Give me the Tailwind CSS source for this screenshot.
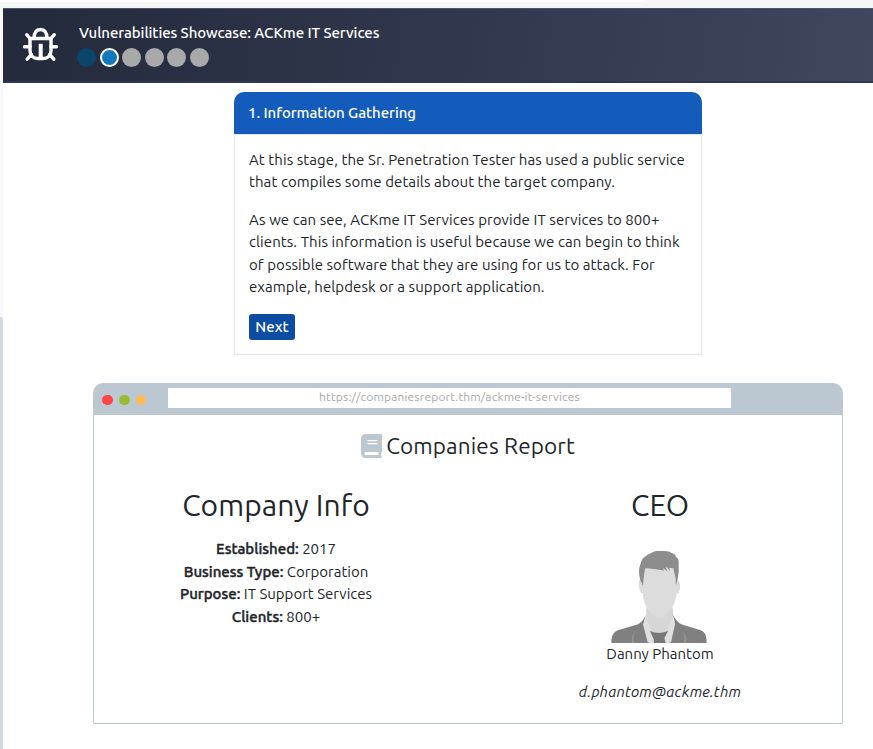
<!DOCTYPE html>
<html lang="en">
<head>
<meta charset="utf-8">
<title>Vulnerabilities Showcase</title>
<script src="https://cdn.jsdelivr.net/npm/@tailwindcss/browser@4"></script>
</head>
<body class="h-[749px] w-[873px] overflow-hidden bg-white font-['Ubuntu','Noto_Sans',sans-serif] text-[15px] leading-[22.4px] text-[#212529]">
<div class="flex h-full flex-col">
  <div class="h-2 shrink-0 bg-[#f6f6f6]"><div class="h-[2px] w-[645px] rounded-br-lg bg-white"></div></div>
  <div class="flex min-h-0 flex-1">
    <aside class="w-[3px] shrink-0 bg-[#f9f9fb] pt-[309px]"><div class="h-full rounded-tr-[3px] bg-[#d2d8e0]"></div></aside>
    <main class="flex flex-1 flex-col">
      <header class="flex h-[75px] shrink-0 border-t border-b-2 border-t-[#4d566e] border-b-[#2e3854] bg-linear-[100deg] from-[#232a3b] from-0% via-[#373e56] via-75% to-[#3f485f] to-100% pl-[19px]">
        <svg class="mt-[17px] h-[38px] w-[38px]" viewBox="0 0 38 38" fill="none" stroke="white" stroke-width="3.4" stroke-linecap="round" stroke-linejoin="round">
          <path d="M12 12.500C12 6.500 14.500 3.500 18.500 3.500S25 6.500 25 12.500"/>
          <path d="M8 12.500h21v12c0 5-3 8-8 8h-5c-5 0-8-3-8-8z"/>
          <path d="M8 12.500L4.700 8.700M29 12.500L32.300 8.700M8 20.800H2.500M29 20.800h5.500M9.500 28.500L5.200 33.200M27.500 28.500L31.800 33.200"/>
          <path d="M18.700 17.800v14" stroke-linecap="butt" stroke-width="4"/>
        </svg>
        <div class="ml-[19px]">
          <div class="mt-[13px] h-[22px] whitespace-nowrap font-medium tracking-[-0.08px] text-white">Vulnerabilities Showcase: ACKme IT Services</div>
          <div class="-ml-[2px] mt-[4px] flex gap-[3.6px]">
            <i class="h-[19px] w-[19px] rounded-full bg-[#0b4569]"></i>
            <i class="h-[19px] w-[19px] rounded-full border-2 border-white bg-[#117abf]"></i>
            <i class="h-[19px] w-[19px] rounded-full bg-[#a9a9a9]"></i>
            <i class="h-[19px] w-[19px] rounded-full bg-[#a9a9a9]"></i>
            <i class="h-[19px] w-[19px] rounded-full bg-[#a9a9a9]"></i>
            <i class="h-[19px] w-[19px] rounded-full bg-[#a9a9a9]"></i>
          </div>
        </div>
      </header>

      <section class="mt-[9px] ml-[231px] h-[263px] w-[468px] shrink-0">
        <h2 class="h-[42px] rounded-t-[10px] bg-[#145cbb] px-[14px] pt-[10px] font-medium tracking-[-0.06px] text-white">1. Information Gathering</h2>
        <div class="h-[221px] border border-[#e5e7e9] px-[14px] pt-[14px] tracking-[0.08px] whitespace-nowrap">
          <p>At this stage, the Sr. Penetration Tester has used a public service<br>that compiles some details about the target company.</p>
          <p class="mt-[15px]">As we can see, ACKme IT Services provide IT services to 800+<br>clients. This information is useful because we can begin to think<br>of possible software that they are using for us to attack. For<br>example, helpdesk or a support application.</p>
          <button class="mt-[15.600px] flex h-[26px] w-[46px] items-center justify-center rounded-[3px] bg-[#0b4da2] font-medium text-white">Next</button>
        </div>
      </section>

      <section class="mt-[28px] ml-[90px] flex h-[341px] w-[750px] shrink-0 flex-col leading-[22.500px]">
        <div class="flex h-[32px] shrink-0 rounded-t-[10px] bg-[#bbc7d1] pl-[9px]">
          <div class="mt-[12px] flex w-[66px] gap-[6px]">
            <i class="h-[10px] w-[11px] rounded-full bg-[#ff4444]"></i>
            <i class="h-[10px] w-[11px] rounded-full bg-[#99bb33]"></i>
            <i class="h-[10px] w-[10px] rounded-full bg-[#ffbb55]"></i>
          </div>
          <div class="mt-[5px] h-[20px] w-[563px] bg-white text-center text-[12px] leading-[18px] tracking-[0.16px] text-[#a9a9a9]">https://companiesreport.thm/ackme-it-services</div>
        </div>
        <div class="flex-1 border border-t-0 border-[#bbc7d1]">
          <h1 class="flex h-[61px] items-center justify-center gap-[4px] whitespace-nowrap text-[22.5px] tracking-[0.12px]">
            <svg class="h-[24px] w-[21px]" viewBox="0 0 21 24"><path fill="#bbc7d1" d="M4.500 0H20a1 1 0 0 1 1 1v16.500a1 1 0 0 1-.6 1c-.4 1.200-.4 2.500 0 3.500.6.300.6 2-.6 2H4.500A4.500 4.500 0 0 1 0 19.500v-15A4.500 4.500 0 0 1 4.500 0z"/><path d="M6.500 6.700h10M6.500 9.700h10" stroke="white" stroke-width="1.200"/><path d="M17.500 18H5a1.500 1.500 0 0 0 0 3h12.500z" fill="white"/></svg>
            <span class="pt-[2px]">Companies Report</span>
          </h1>
          <div class="grid grid-cols-[364px_1fr] text-center whitespace-nowrap">
            <div class="pt-[9px]">
              <h2 class="h-[42px] text-[30px] leading-[40px] tracking-[0.08px]">Company Info</h2>
              <p class="mt-[11.300px]"><b class="font-medium [-webkit-text-stroke:0.4px_#212529]">Established:</b> 2017</p>
              <p><b class="font-medium [-webkit-text-stroke:0.4px_#212529]">Business Type:</b> Corporation</p>
              <p><b class="font-medium [-webkit-text-stroke:0.4px_#212529]">Purpose:</b> IT Support Services</p>
              <p><b class="font-medium [-webkit-text-stroke:0.4px_#212529]">Clients:</b> 800+</p>
            </div>
            <div class="pt-[9px] pl-[20px]">
              <h2 class="h-[42px] text-[30px] leading-[40px]">CEO</h2>
              <svg class="relative -left-px mx-auto mt-[24px] h-[92px] w-[96px]" viewBox="33 33 288 276">
                <path fill="#cfcfcf" d="M140 205h78l6 104h-90z"/>
                <path fill="#808080" d="M34 309c0-22 6-32 20-38l60-18q14-8 24-28l-6 20 16 64zM320 309c0-22-4-32-18-38l-58-18q-16-8-26-30l6 22-16 64z"/>
                <path fill="#959595" d="M106 272q-8 18-4 37h-6q-4-20 10-37zM248 272q8 18 4 37h6q4-20-10-37z"/>
                <path fill="#d6d6d6" d="M140 200h77q-2 30 7 52l-26 24h-44l-20-26q8-22 6-50z"/>
                <path fill="#e0e0e0" d="M137 226q-2 14-8 27l14 54 16 2 4-10-15-29 5-4q-14-20-16-40zM217 226q2 14 8 27l-12 54-18 2-2-10 12-29-5-4q14-20 17-40z"/>
                <path fill="#787878" d="M150 273q26 12 54 0l-11 21 4 15h-35l-1-12z"/>
                <path fill="#dcdcdc" d="M128 82h98v42q0-4 4-4c12 0 12 22 8 34q-2 8-8 8c-4 28-14 42-26 56-14 20-38 20-52 0-14-16-22-32-24-58q-6 0-8-8c-6-18-6-34 4-34l4 4z"/>
                <path fill="#8d8d8d" d="M129 137l-8-16c-5-22-5-34-1-44 4-12 4-20 14-26 10-8 22-14 34-18h22q20 0 24 6 12 2 14 12 8 4 8 16v30q-2 22-8 40l-2-26-6-26-12-2 3 11-10-12-4 1 6 12-14-11 3 8c-24-4-40-7-56-7q-5 20-7 52z"/>
              </svg>
              <p>Danny Phantom</p>
              <p class="mt-[15.500px] italic tracking-[0.18px]">d.phantom@ackme.thm</p>
            </div>
          </div>
        </div>
      </section>
    </main>
  </div>
</div>
</body>
</html>
